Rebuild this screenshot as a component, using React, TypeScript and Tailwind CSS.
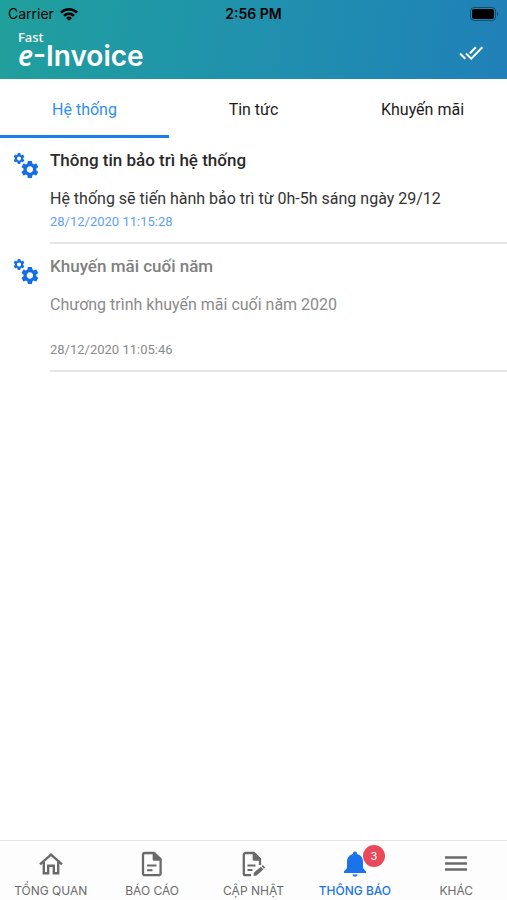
import { useState } from 'react';
import clsx from 'clsx';

interface Notice {
  id: number;
  title: string;
  body: string;
  time: string;
  unread: boolean;
}

const TABS = ['Hệ thống', 'Tin tức', 'Khuyến mãi'];

const NOTICES: Notice[] = [
  {
    id: 1,
    title: 'Thông tin bảo trì hệ thống',
    body: 'Hệ thống sẽ tiến hành bảo trì từ 0h-5h sáng ngày 29/12',
    time: '28/12/2020 11:15:28',
    unread: true,
  },
  {
    id: 2,
    title: 'Khuyến mãi cuối năm',
    body: 'Chương trình khuyến mãi cuối năm 2020\n\n',
    time: '28/12/2020 11:05:46',
    unread: false,
  },
];

const GEAR =
  'M19.14 12.94c.04-.3.06-.61.06-.94 0-.32-.02-.64-.07-.94l2.03-1.58c.18-.14.23-.41.12-.61l-1.92-3.32c-.12-.22-.37-.29-.59-.22l-2.39.96c-.5-.38-1.03-.7-1.62-.94l-.36-2.54c-.04-.24-.24-.41-.48-.41h-3.84c-.24 0-.43.17-.47.41l-.36 2.54c-.59.24-1.13.57-1.62.94l-2.39-.96c-.22-.08-.47 0-.59.22L2.74 8.87c-.12.21-.08.47.12.61l2.03 1.58c-.05.3-.09.63-.09.94s.02.64.07.94l-2.03 1.58c-.18.14-.23.41-.12.61l1.92 3.32c.12.22.37.29.59.22l2.39-.96c.5.38 1.03.7 1.62.94l.36 2.54c.05.24.24.41.48.41h3.84c.24 0 .44-.17.47-.41l.36-2.54c.59-.24 1.13-.56 1.62-.94l2.39.96c.22.08.47 0 .59-.22l1.92-3.32c.12-.22.07-.47-.12-.61l-2.01-1.58zM12 15.6c-1.98 0-3.6-1.62-3.6-3.6s1.62-3.6 3.6-3.6 3.6 1.62 3.6 3.6-1.62 3.6-3.6 3.6z';

function GearsIcon() {
  return (
    <svg viewBox="0 0 28 28" className="h-7 w-7 shrink-0 text-[#146ee6]" fill="currentColor" aria-hidden="true">
      <path d={GEAR} transform="translate(.2 -.4) scale(.57)" />
      <path d={GEAR} transform="translate(7.2 6.8) scale(.89)" />
    </svg>
  );
}

function StatusBar() {
  return (
    <div className="grid grid-cols-3 items-center px-2 pt-1 text-black">
      <div className="flex items-center gap-1.5 text-sm leading-5">
        <span>Carrier</span>
        <svg viewBox="0 0 18 13" className="h-[13px] w-[18px]" fill="none" stroke="currentColor" strokeWidth="2.5" aria-hidden="true">
          <path d="M1 4.6a11.4 11.4 0 0 1 16 0" />
          <path d="M4 7.8a7.2 7.2 0 0 1 10 0" />
          <path d="M9 12.8 6 9.9a4.4 4.4 0 0 1 6 0z" fill="currentColor" stroke="none" />
        </svg>
      </div>
      <div className="text-center text-sm leading-5 font-semibold">2:56 PM</div>
      <svg viewBox="0 0 29 14" className="h-[14px] w-[29px] justify-self-end" aria-hidden="true">
        <rect x=".5" y=".5" width="25" height="13" rx="3.5" fill="none" stroke="#000" strokeOpacity=".4" />
        <rect x="2" y="2" width="22" height="10" rx="2" />
        <path d="M27 4.8c1.6.6 1.6 3.8 0 4.4z" fillOpacity=".45" />
      </svg>
    </div>
  );
}

function HomeIcon() {
  return (
    <svg viewBox="0 0 24 24" className="h-6 w-6" fill="none" stroke="currentColor" strokeWidth="2.4" aria-hidden="true">
      <path d="M1 12.4 12 2.6l11 9.8" />
      <path d="M4.8 10v11.2h4.4v-7.4h5.6v7.4h4.4V10" />
    </svg>
  );
}

function ReportIcon() {
  return (
    <svg viewBox="0 0 24 26" className="h-[26px] w-6" fill="none" stroke="currentColor" strokeWidth="2.3" strokeLinejoin="round" aria-hidden="true">
      <path d="M4.8 2h9.4l6.4 6v14.4a1.8 1.8 0 0 1-1.8 1.8h-14A1.8 1.8 0 0 1 3 22.4V3.8A1.8 1.8 0 0 1 4.8 2z" />
      <path d="M13.8 2v6.5h6.4z" fill="currentColor" />
      <path d="M7 14.5h9.5M7 19.2h5.5" strokeWidth="2" />
    </svg>
  );
}

function UpdateIcon() {
  return (
    <svg viewBox="0 0 24 26" className="h-[26px] w-6" fill="none" stroke="currentColor" strokeWidth="2.3" strokeLinejoin="round" aria-hidden="true">
      <path d="M10 24.2H4.6a1.8 1.8 0 0 1-1.8-1.8V3.8A1.8 1.8 0 0 1 4.6 2H13l6 6v6" />
      <path d="M12.8 2v6.5h6.2z" fill="currentColor" />
      <path d="M6.5 14.5h8M6.5 19h5" strokeWidth="2" />
      <path d="m12.6 25 .3-3.3 7-6 2.4 2.7-6.8 6z" fill="currentColor" stroke="none" />
      <path d="m20.600 15.100 1.300-1.100 2.300 2.700-1.300 1.100z" fill="currentColor" stroke="none" />
    </svg>
  );
}

function BellIcon() {
  return (
    <svg viewBox="0 0 24 26" className="h-[26px] w-6" fill="currentColor" aria-hidden="true">
      <path d="M12 .5c1.200 0 2 .8 2 2v.6c3.700.9 6 3.800 6 7.700v6.400l3 3.100v1.600H1v-1.600l3-3.100v-6.400c0-3.900 2.300-6.800 6-7.700v-.6c0-1.200.8-2 2-2z" />
      <path d="M9.500 23.400h5c0 1.300-1.100 2.200-2.500 2.200s-2.500-.9-2.500-2.200z" />
    </svg>
  );
}

function MenuIcon() {
  return (
    <svg viewBox="0 0 24 24" className="h-6 w-6" stroke="currentColor" strokeWidth="2.3" aria-hidden="true">
      <path d="M1 5.5h22M1 11.5h22M1 17.5h22" />
    </svg>
  );
}

const NAV = [
  { label: 'TỔNG QUAN', Icon: HomeIcon },
  { label: 'BÁO CÁO', Icon: ReportIcon },
  { label: 'CẬP NHẬT', Icon: UpdateIcon },
  { label: 'THÔNG BÁO', Icon: BellIcon, badge: 3 },
  { label: 'KHÁC', Icon: MenuIcon },
];

export default function App() {
  const [activeTab, setActiveTab] = useState('Hệ thống');
  const [activeNav, setActiveNav] = useState('THÔNG BÁO');
  const [notices, setNotices] = useState(NOTICES);

  const markAllRead = () => setNotices(notices.map(n => ({ ...n, unread: false })));

  return (
    <div className="flex min-h-screen flex-col bg-white font-['Roboto',sans-serif]">
      {/* Header */}
      <header className="bg-linear-100 from-[#20a09c] via-[#2091ad] to-[#2080b8] pb-[13px] font-['Inter',sans-serif]">
        <StatusBar />
        <div className="flex items-center justify-between pt-1.5 pr-6 pl-[18px] text-white">
          <h1>
            <span className="block font-['Noto_Sans',sans-serif] text-[13px] leading-[15px] font-medium">Fast</span>
            <span className="block text-[28px] leading-5 font-semibold">
              <i className="font-['Noto_Sans',sans-serif]">e</i>-Invoice
            </span>
          </h1>
          <button type="button" onClick={markAllRead} aria-label="Đánh dấu tất cả đã đọc" className="pt-2.5">
            <svg viewBox="0 0 24 16" className="h-4 w-6" fill="none" stroke="currentColor" strokeWidth="2" aria-hidden="true">
              <path d="m1 8.5 5.3 5.2M7 8.5l5.3 5.2L23.300 2.200M10.800 8.500l6-6.300" />
            </svg>
          </button>
        </div>
      </header>

      {/* Tabs */}
      <div role="tablist" className="grid grid-cols-3">
        {TABS.map(tab => (
          <button
            key={tab}
            type="button"
            role="tab"
            aria-selected={tab === activeTab}
            onClick={() => setActiveTab(tab)}
            className={clsx(
              'border-b-3 pt-5 pb-3.5 text-base leading-[22px]',
              tab === activeTab ? 'border-[#1c7ee8] text-[#2f8fe8]' : 'border-transparent text-[#1c1c1c]'
            )}
          >
            {tab}
          </button>
        ))}
      </div>

      {/* Notices */}
      <main className="flex-1">
        <ul>
          {notices.map(notice => (
            <li key={notice.id} className="flex gap-2 pl-3">
              <div className="w-[30px] pt-3.5">
                <GearsIcon />
              </div>
              <div className="flex-1 border-b-2 border-[#e6e6e6] pt-3 pb-2.5">
                <h2
                  className={clsx(
                    'text-[17px] leading-5 font-medium',
                    notice.unread ? 'text-[#2a2a2a]' : 'text-[#808080]'
                  )}
                >
                  {notice.title}
                </h2>
                <p
                  className={clsx(
                    'mt-[18px] text-base leading-[22px] whitespace-pre-line',
                    notice.unread ? 'text-[#333333]' : 'text-[#8a8a8a]'
                  )}
                >
                  {notice.body}
                </p>
                <time
                  className={clsx(
                    'mt-0.5 block text-[13px] leading-5',
                    notice.unread ? 'text-[#619ff2]' : 'text-[#8a8a8a]'
                  )}
                >
                  {notice.time}
                </time>
              </div>
            </li>
          ))}
        </ul>
      </main>

      {/* Bottom navigation */}
      <nav className="grid grid-cols-5 border-t border-[#e2e2e2] bg-[#fdfdfd] font-['Inter',sans-serif]">
        {NAV.map(({ label, Icon, badge }) => (
          <a
            key={label}
            href="#"
            onClick={e => {
              e.preventDefault();
              setActiveNav(label);
            }}
            className={clsx(
              'flex flex-col items-center pt-2 pb-px text-xs leading-4 whitespace-nowrap',
              label === activeNav ? 'font-medium text-[#1a73ea]' : 'text-[#6a6a6a]'
            )}
          >
            <span className="relative flex h-[30px] items-center">
              <Icon />
              {badge && (
                <span className="absolute -top-1 left-5 flex size-[22px] items-center justify-center rounded-full bg-[#e84a5c] text-[11px] font-normal text-white">
                  {badge}
                </span>
              )}
            </span>
            <span className="mt-1">{label}</span>
          </a>
        ))}
      </nav>
    </div>
  );
}
